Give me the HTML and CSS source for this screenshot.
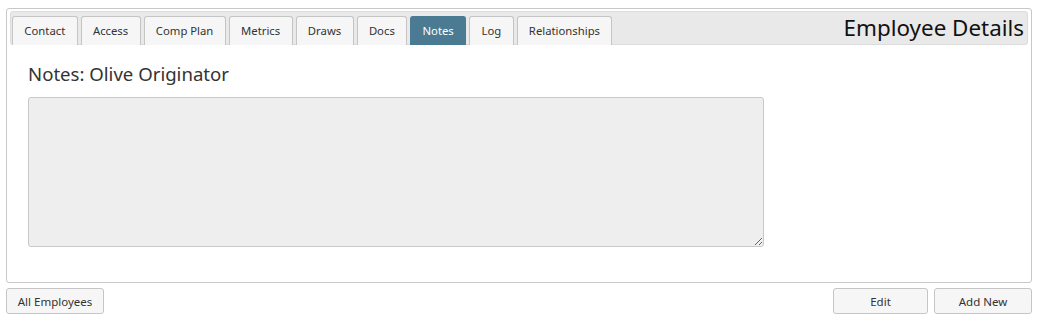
FILE: index.html
```html
<!DOCTYPE html>
<html>
<head>
<meta charset="utf-8">
<link rel="stylesheet" href="styles.css">
</head>
<body>
<div class="panel">
  <div class="tabbar">
    <ul class="tabs">
      <li class="tab">Contact</li>
      <li class="tab">Access</li>
      <li class="tab">Comp Plan</li>
      <li class="tab">Metrics</li>
      <li class="tab">Draws</li>
      <li class="tab">Docs</li>
      <li class="tab active">Notes</li>
      <li class="tab">Log</li>
      <li class="tab">Relationships</li>
    </ul>
    <div class="title">Employee Details</div>
  </div>
  <div class="content">
    <h2 class="heading">Notes: Olive Originator</h2>
    <textarea class="notes" readonly></textarea>
  </div>
</div>
<div class="actions">
  <button class="btn btn-all">All Employees</button>
  <div class="right">
    <button class="btn btn-edit">Edit</button>
    <button class="btn btn-add">Add New</button>
  </div>
</div>
</body>
</html>
```

FILE: styles.css
```css
html, body {
  margin: 0;
  padding: 0;
  background: #fff;
}
body {
  padding: 8px 8px 0 6px;
  font-family: "Noto Sans", "Open Sans", sans-serif;
  color: #333;
}
.panel {
  border: 1px solid #c8c8c8;
  border-radius: 3px;
  padding: 2px 3px 0 3px;
  box-sizing: border-box;
  height: 275px;
}
.tabbar {
  display: flex;
  align-items: flex-end;
  justify-content: space-between;
  background: #e9e9e9;
  border: 1px solid #dcdcdc;
  border-radius: 3px;
  height: 34px;
  box-sizing: border-box;
  padding: 0 3px 0 1px;
}
.tabs {
  list-style: none;
  margin: 0 0 -1px 0;
  padding: 0;
  display: flex;
  gap: 3px;
}
.tab {
  font-family: "Noto Sans", sans-serif;
  font-size: 11.3px;
  color: #333;
  background: #f6f6f6;
  border: 1px solid #c5c5c5;
  border-bottom: none;
  border-radius: 3px 3px 0 0;
  height: 29px;
  line-height: 28px;
  box-sizing: border-box;
  padding: 0 11.35px;
}
.tab.active {
  background: #4b7b92;
  border-color: #4b7b92;
  color: #fff;
}
.title {
  font-family: "Noto Sans", sans-serif;
  font-size: 22.4px;
  color: #111;
  align-self: center;
  line-height: 30px;
}
.content {
  padding: 16px 18px 0 18px;
}
.heading {
  margin: 0;
  font-weight: normal;
  font-size: 18.6px;
  line-height: 26px;
  color: #333;
}
.notes {
  display: block;
  margin-top: 10px;
  width: 736px;
  height: 150px;
  box-sizing: border-box;
  background: #eeeeee;
  border: 1px solid #c8c8c8;
  border-radius: 3px;
  resize: both;
}
.actions {
  display: flex;
  justify-content: space-between;
  margin-top: 5px;
}
.right {
  display: flex;
  gap: 6px;
}
.btn {
  font-family: "Noto Sans", sans-serif;
  font-size: 11.5px;
  color: #333;
  background: #f6f6f6;
  border: 1px solid #c5c5c5;
  border-radius: 3px;
  height: 26px;
  padding: 0;
}
.btn-all { width: 98px; }
.btn-edit { width: 95px; }
.btn-add { width: 98px; }
```
